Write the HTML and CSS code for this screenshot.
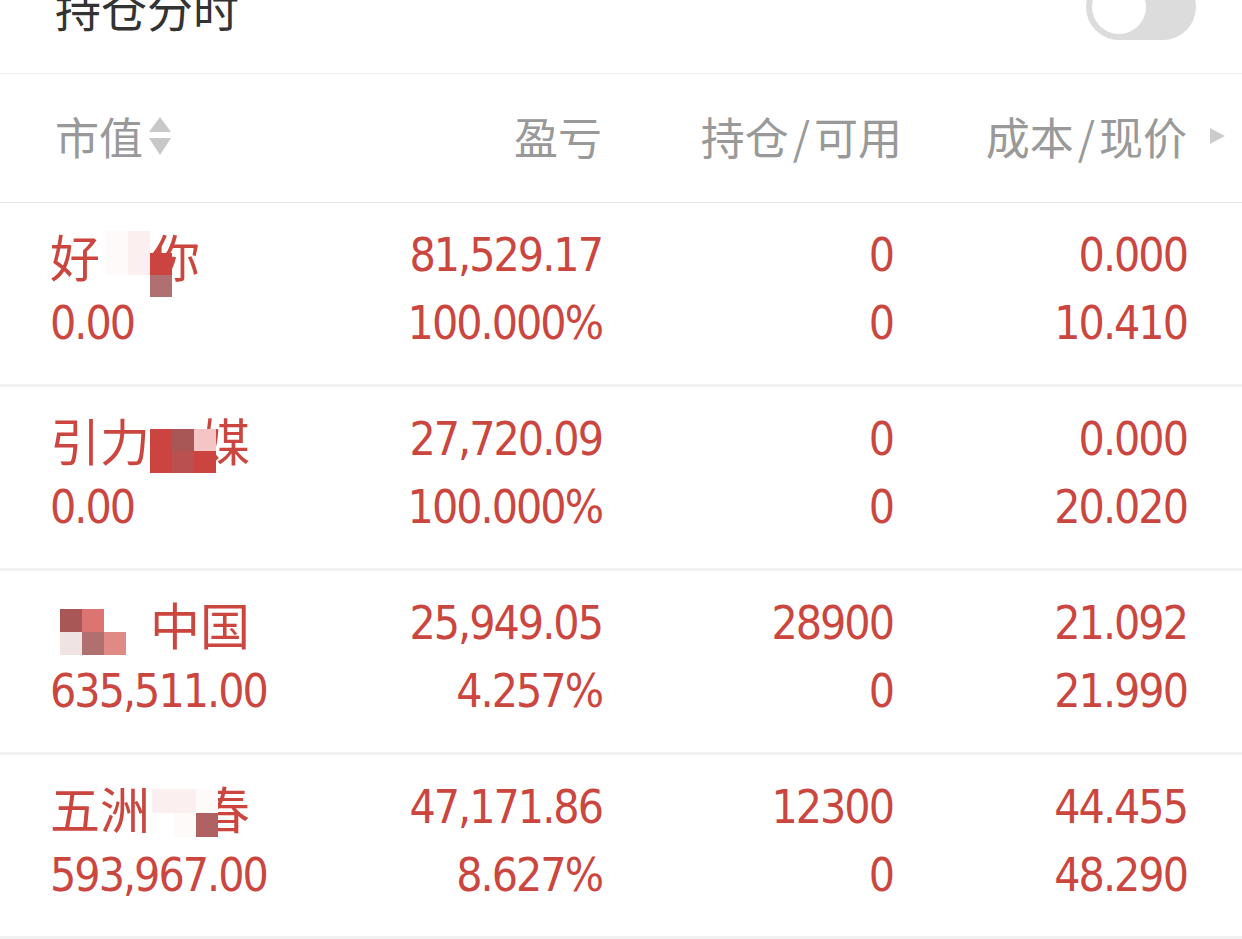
FILE: index.html
```html
<!DOCTYPE html>
<html>
<head>
  <meta charset="utf-8">
  <title>持仓</title>
  <link rel="stylesheet" href="styles.css">
</head>
<body>
  <div class="topbar">
    <span class="title">持仓分时</span>
    <div class="switch"><span class="knob"></span></div>
  </div>

  <div class="thead">
    <div class="th th-first">
      市值
      <svg class="sort-icon" width="24" height="40" viewBox="0 0 24 40">
        <polygon points="12,1 23,16 1,16" fill="#c8c8c8"/>
        <polygon points="1,22 23,22 12,39" fill="#c8c8c8"/>
      </svg>
    </div>
    <div class="th">盈亏</div>
    <div class="th">持仓<span class="slash">/</span>可用</div>
    <div class="th th-last">
      <span>成本<span class="slash">/</span>现价</span>
      <svg class="more-icon" width="15" height="16" viewBox="0 0 15 16">
        <polygon points="0,0 15,8 0,16" fill="#cccccc"/>
      </svg>
    </div>
  </div>

  <div class="list">
    <div class="row">
      <div class="cell">
        <div class="name">
          <span>好</span>
          <span class="mosaic mosaic-one">
            <i class="m-white"></i><i class="m-pale"></i><i class="m-clear"></i>
            <i class="m-white"></i><i class="m-pale"></i><i class="m-red"></i>
            <i class="m-clear"></i><i class="m-clear"></i><i class="m-rose"></i>
          </span>
          <span>你</span>
        </div>
        <div class="line num left">0.00</div>
      </div>
      <div class="cell">
        <div class="line num">81,529.17</div>
        <div class="line num">100.000%</div>
      </div>
      <div class="cell">
        <div class="line num">0</div>
        <div class="line num">0</div>
      </div>
      <div class="cell">
        <div class="line num">0.000</div>
        <div class="line num">10.410</div>
      </div>
    </div>

    <div class="row">
      <div class="cell">
        <div class="name">
          <span>引力</span>
          <span class="mosaic mosaic-two">
            <i class="m-red"></i><i class="m-wine"></i><i class="m-blush"></i>
            <i class="m-red"></i><i class="m-brick"></i><i class="m-red"></i>
          </span>
          <span>媒</span>
        </div>
        <div class="line num left">0.00</div>
      </div>
      <div class="cell">
        <div class="line num">27,720.09</div>
        <div class="line num">100.000%</div>
      </div>
      <div class="cell">
        <div class="line num">0</div>
        <div class="line num">0</div>
      </div>
      <div class="cell">
        <div class="line num">0.000</div>
        <div class="line num">20.020</div>
      </div>
    </div>

    <div class="row">
      <div class="cell">
        <div class="name">
          <span class="mosaic mosaic-three">
            <i class="m-wine"></i><i class="m-coral"></i><i class="m-clear"></i>
            <i class="m-mist"></i><i class="m-rose"></i><i class="m-salmon"></i>
          </span>
          <span>中国</span>
        </div>
        <div class="line num left">635,511.00</div>
      </div>
      <div class="cell">
        <div class="line num">25,949.05</div>
        <div class="line num">4.257%</div>
      </div>
      <div class="cell">
        <div class="line num">28900</div>
        <div class="line num">0</div>
      </div>
      <div class="cell">
        <div class="line num">21.092</div>
        <div class="line num">21.990</div>
      </div>
    </div>

    <div class="row">
      <div class="cell">
        <div class="name">
          <span>五洲</span>
          <span class="mosaic mosaic-four">
            <i class="m-pale"></i><i class="m-pale"></i><i class="m-white"></i>
            <i class="m-clear"></i><i class="m-white"></i><i class="m-plum"></i>
          </span>
          <span>春</span>
        </div>
        <div class="line num left">593,967.00</div>
      </div>
      <div class="cell">
        <div class="line num">47,171.86</div>
        <div class="line num">8.627%</div>
      </div>
      <div class="cell">
        <div class="line num">12300</div>
        <div class="line num">0</div>
      </div>
      <div class="cell">
        <div class="line num">44.455</div>
        <div class="line num">48.290</div>
      </div>
    </div>
  </div>
</body>
</html>
```

FILE: styles.css
```css
html, body {
  margin: 0;
  padding: 0;
  background: #fff;
}

body {
  font-family: "Noto Sans CJK SC", sans-serif;
  overflow: hidden;
}

/* top bar, cut off by the screenshot */
.topbar {
  height: 134px;
  margin-top: -60px;
  padding: 0 46px 0 55px;
  box-sizing: border-box;
  display: flex;
  align-items: center;
  justify-content: space-between;
  border-bottom: 1px solid #ececec;
}

.title {
  font-size: 46px;
  line-height: 1;
  color: #333;
}

.switch {
  width: 110px;
  height: 66px;
  border-radius: 33px;
  background: #dcdcdc;
  padding: 0 6px;
  box-sizing: border-box;
  display: flex;
  align-items: center;
}

.knob {
  width: 54px;
  height: 54px;
  border-radius: 50%;
  background: #fff;
}

/* table header */
.thead {
  height: 129px;
  padding: 0 17px 0 55px;
  box-sizing: border-box;
  display: grid;
  grid-template-columns: 265px 282px 300px 323px;
  align-items: center;
  border-bottom: 1px solid #e8e8e8;
  color: #999;
  font-size: 44px;
}

.th {
  display: flex;
  align-items: center;
  justify-content: flex-end;
  line-height: 1;
  margin-top: -4px;
}

.th-first {
  justify-content: flex-start;
  gap: 5px;
}

.th-last {
  gap: 23px;
}

.slash {
  padding: 0 4px;
}

/* rows */
.row {
  display: grid;
  grid-template-columns: 270px 282px 291px 294px;
  padding: 18px 55px 27px 50px;
  border-bottom: 3px solid #f1f1f1;
  color: #cb463f;
}

.line {
  height: 68px;
  line-height: 68px;
}

.num {
  font-family: "DejaVu Sans Condensed", "Liberation Sans", sans-serif;
  font-size: 46px;
  letter-spacing: -2px;
  text-align: right;
  white-space: nowrap;
}

.num.left {
  text-align: left;
}

.name {
  height: 68px;
  display: flex;
  align-items: flex-start;
  font-size: 50px;
  line-height: 68px;
  white-space: nowrap;
}

/* pixelated cover over hidden characters */
.mosaic {
  position: relative;
  z-index: 1;
  display: grid;
  grid-template-columns: repeat(3, 22px);
  grid-auto-rows: 22px;
}

.mosaic i {
  display: block;
}

.mosaic-one {
  margin: 10px -22px 0 6px;
}

.mosaic-two {
  margin: 24px -16px 0 0;
}

.mosaic-three {
  margin: 20px 24px 0 10px;
  grid-auto-rows: 23px;
}

.mosaic-four {
  margin: 16px -18px 0 2px;
  grid-auto-rows: 24px;
}

.m-clear { background: transparent; }
.m-white { background: #fffafa; }
.m-pale { background: #fcefef; }
.m-blush { background: #f5c4c4; }
.m-red { background: #cc4440; }
.m-rose { background: #b07070; }
.m-wine { background: #a95656; }
.m-brick { background: #bb5050; }
.m-coral { background: #dc7572; }
.m-salmon { background: #e08a86; }
.m-mist { background: #efe3e3; }
.m-plum { background: #b06262; }
```
